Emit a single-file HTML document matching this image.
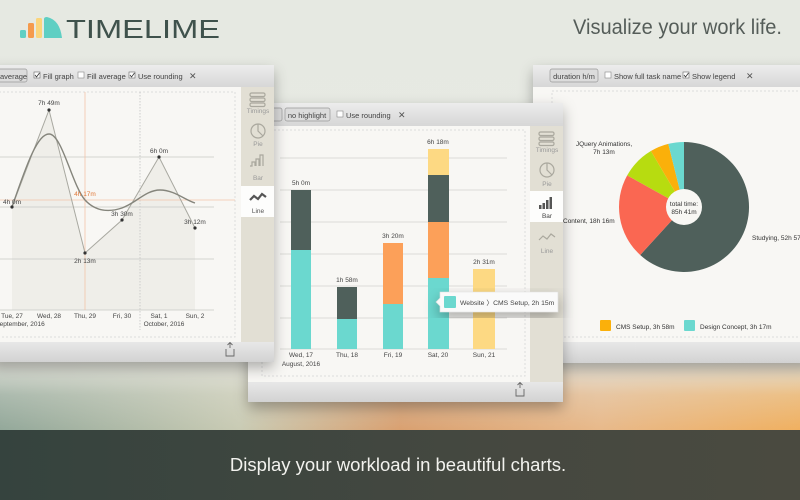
<!DOCTYPE html>
<html><head><meta charset="utf-8"><style>
html,body{margin:0;padding:0;width:800px;height:500px;overflow:hidden}
svg{display:block}
text{font-family:"Liberation Sans",sans-serif}
</style></head><body>
<svg width="800" height="500" viewBox="0 0 800 500" xmlns="http://www.w3.org/2000/svg">
<defs>
<linearGradient id="bg" x1="0" y1="0" x2="0" y2="1">
<stop offset="0" stop-color="#e6e9e2"/><stop offset="0.6" stop-color="#e8eae4"/><stop offset="1" stop-color="#dcdfd6"/>
</linearGradient>
<linearGradient id="band" x1="0" y1="0" x2="1" y2="0">
<stop offset="0" stop-color="#93a89a"/><stop offset="0.3" stop-color="#c9cbb4"/><stop offset="0.5" stop-color="#d9a070"/><stop offset="0.75" stop-color="#e8b98a"/><stop offset="1" stop-color="#f0b060"/>
</linearGradient>
<linearGradient id="bandv" x1="0" y1="0" x2="0" y2="1">
<stop offset="0" stop-color="#e4e4dc" stop-opacity="1"/><stop offset="0.5" stop-color="#e4e4dc" stop-opacity="0.3"/><stop offset="1" stop-color="#e4e4dc" stop-opacity="0"/>
</linearGradient>
<linearGradient id="dark" x1="0" y1="0" x2="1" y2="0">
<stop offset="0" stop-color="#35433e"/><stop offset="0.6" stop-color="#454840"/><stop offset="1" stop-color="#4a4a40"/>
</linearGradient>
<linearGradient id="tb" x1="0" y1="0" x2="0" y2="1">
<stop offset="0" stop-color="#ececec"/><stop offset="1" stop-color="#d6d6d6"/>
</linearGradient>
<linearGradient id="ft" x1="0" y1="0" x2="0" y2="1">
<stop offset="0" stop-color="#e8e8e8"/><stop offset="1" stop-color="#d2d2d2"/>
</linearGradient>
<filter id="sh" x="-20%" y="-20%" width="140%" height="150%"><feDropShadow dx="0" dy="6" stdDeviation="7" flood-color="#000" flood-opacity="0.3"/></filter>
</defs>
<rect width="800" height="500" fill="url(#bg)"/>
<rect y="360" width="800" height="70" fill="url(#band)"/>
<rect y="360" width="800" height="70" fill="url(#bandv)"/>
<rect y="430" width="800" height="70" fill="url(#dark)"/>
<text x="398" y="471" text-anchor="middle" font-size="18.5" fill="#f2f2ee">Display your workload in beautiful charts.</text>

<!-- logo -->
<rect x="20" y="30" width="6" height="8" rx="1.5" fill="#5fcfc3"/>
<rect x="28" y="23" width="6" height="15" rx="1.5" fill="#f59a4c"/>
<rect x="36" y="18" width="6" height="20" rx="1.5" fill="#fbd57b"/>
<path d="M44,38 L44,19 Q44,17 47,17 Q60,20 62,38 Z" fill="#5fcfc3"/>
<text x="66" y="38" font-size="26" fill="#3f524c" textLength="154" lengthAdjust="spacingAndGlyphs">TIMELIME</text>
<text x="573" y="34" font-size="21" fill="#555d59" textLength="209" lengthAdjust="spacingAndGlyphs">Visualize your work life.</text>

<!-- RIGHT WINDOW -->
<g filter="url(#sh)">
<rect x="533" y="65" width="280" height="298" fill="#f8f7f4"/>
<rect x="533" y="65" width="280" height="22" fill="url(#tb)"/>
<rect x="533" y="342" width="280" height="21" fill="url(#ft)"/>
</g>
<rect x="550" y="69" width="48" height="13" rx="2" fill="#dcdcdc" stroke="#999" stroke-width="0.7"/>
<text x="574" y="79" font-size="7.5" text-anchor="middle" fill="#444">duration h/m</text>
<rect x="605" y="72" width="6" height="6" fill="#fff" stroke="#888" stroke-width="0.6"/>
<text x="614" y="79" font-size="7.5" fill="#444">Show full task name</text>
<rect x="683" y="72" width="6" height="6" fill="#fff" stroke="#666" stroke-width="0.6"/>
<path d="M684,75 l1.5,2 l3,-4" stroke="#333" fill="none" stroke-width="0.8"/>
<text x="692" y="79" font-size="7.5" fill="#444">Show legend</text>
<text x="746" y="79" font-size="9" fill="#555">✕</text>
<rect x="552" y="91" width="260" height="246" fill="none" stroke="#ddd" stroke-dasharray="2,2"/>
<path d="M684,207 L684,142 A65,65 0 1 1 640.2,255 Z" fill="#4f605b"/>
<path d="M684,207 L640.2,255 A65,65 0 0 1 627.2,175.4 Z" fill="#fa6752"/>
<path d="M684,207 L627.2,175.4 A65,65 0 0 1 650.9,151 Z" fill="#b7dc10"/>
<path d="M684,207 L650.9,151 A65,65 0 0 1 668.3,143.9 Z" fill="#fbb00a"/>
<path d="M684,207 L668.3,143.9 A65,65 0 0 1 684,142 Z" fill="#6bd8cf"/>
<circle cx="684" cy="207" r="18" fill="#f8f7f4"/>
<text x="684" y="206" font-size="6.5" text-anchor="middle" fill="#333">total time:</text>
<text x="684" y="214" font-size="6.5" text-anchor="middle" fill="#333">85h 41m</text>
<text x="604" y="146" font-size="6.5" text-anchor="middle" fill="#333">JQuery Animations,</text>
<text x="604" y="154" font-size="6.5" text-anchor="middle" fill="#333">7h 13m</text>
<text x="563" y="223" font-size="6.5" fill="#333">Content, 18h 16m</text>
<text x="752" y="240" font-size="6.5" fill="#333">Studying, 52h 57m</text>
<rect x="600" y="320" width="11" height="11" rx="1" fill="#fbb00a"/>
<text x="616" y="329" font-size="6.5" fill="#333">CMS Setup, 3h 58m</text>
<rect x="684" y="320" width="11" height="11" rx="1" fill="#6bd8cf"/>
<text x="700" y="329" font-size="6.5" fill="#333">Design Concept, 3h 17m</text>

<!-- MIDDLE WINDOW -->
<g filter="url(#sh)">
<rect x="248" y="103" width="315" height="299" fill="#f8f7f4"/>
<rect x="248" y="103" width="315" height="23" fill="url(#tb)"/>
<rect x="248" y="382" width="315" height="20" fill="url(#ft)"/>
</g>
<rect x="272" y="108" width="10" height="13" rx="2" fill="#dcdcdc" stroke="#999" stroke-width="0.7"/>
<rect x="285" y="108" width="45" height="13" rx="2" fill="#dcdcdc" stroke="#999" stroke-width="0.7"/>
<text x="307" y="118" font-size="7.5" text-anchor="middle" fill="#444">no highlight</text>
<rect x="337" y="111" width="6" height="6" fill="#fff" stroke="#888" stroke-width="0.6"/>
<text x="346" y="118" font-size="7.5" fill="#444">Use rounding</text>
<text x="398" y="118" font-size="9" fill="#555">✕</text>
<rect x="262" y="130" width="263" height="246" fill="none" stroke="#ddd" stroke-dasharray="2,2"/>
<g stroke="#d2d2ce" stroke-width="0.8">
<line x1="280" y1="158" x2="507" y2="158"/><line x1="280" y1="190" x2="507" y2="190"/><line x1="280" y1="222" x2="507" y2="222"/><line x1="280" y1="254" x2="507" y2="254"/><line x1="280" y1="286" x2="507" y2="286"/><line x1="280" y1="318" x2="507" y2="318"/><line x1="280" y1="349" x2="507" y2="349"/>
</g>
<rect x="291" y="190" width="20" height="60" fill="#4f605b"/><rect x="291" y="250" width="20" height="99" fill="#6bd8cf"/>
<rect x="337" y="287" width="20" height="32" fill="#4f605b"/><rect x="337" y="319" width="20" height="30" fill="#6bd8cf"/>
<rect x="383" y="243" width="20" height="61" fill="#fca059"/><rect x="383" y="304" width="20" height="45" fill="#6bd8cf"/>
<rect x="428" y="149" width="21" height="26" fill="#fdd983"/><rect x="428" y="175" width="21" height="47" fill="#4f605b"/><rect x="428" y="222" width="21" height="56" fill="#fca059"/><rect x="428" y="278" width="21" height="71" fill="#6bd8cf"/>
<rect x="473" y="269" width="22" height="80" fill="#fdd983"/>
<g font-size="6.5" fill="#444" text-anchor="middle">
<text x="301" y="185">5h 0m</text><text x="347" y="282">1h 58m</text><text x="393" y="238">3h 20m</text><text x="438" y="144">6h 18m</text><text x="484" y="264">2h 31m</text>
<text x="301" y="357">Wed, 17</text><text x="347" y="357">Thu, 18</text><text x="393" y="357">Fri, 19</text><text x="438" y="357">Sat, 20</text><text x="484" y="357">Sun, 21</text>
<text x="301" y="366">August, 2016</text>
</g>
<rect x="530" y="126" width="33" height="256" fill="#e2dfd4"/>
<rect x="530" y="191" width="33" height="31" fill="#fdfdfc"/>
<g fill="none" stroke="#aaa89e" stroke-width="1.2">
<rect x="539" y="132" width="15" height="3.5" rx="1.5"/><rect x="539" y="137" width="15" height="3.5" rx="1.5"/><rect x="539" y="142" width="15" height="3.5" rx="1.5"/>
<circle cx="547" cy="170" r="7"/><path d="M547,163 V170 L552,175"/>
<path d="M539,240 l4,-4 l4,3 l4,-5 l4,3"/>
</g>
<g font-size="6.5" fill="#999" text-anchor="middle"><text x="547" y="152">Timings</text><text x="547" y="186">Pie</text><text x="547" y="253">Line</text></g>
<g fill="#555"><rect x="539" y="205" width="2.5" height="4"/><rect x="542.5" y="203" width="2.5" height="6"/><rect x="546" y="200" width="2.5" height="9"/><rect x="549.5" y="197" width="2.5" height="12"/></g>
<text x="547" y="218" font-size="6.5" fill="#444" text-anchor="middle">Bar</text>
<path d="M516,389 v7 h8 v-7 M520,388 v-5 M517.5,385 l2.5,-2.5 l2.5,2.5" fill="none" stroke="#666" stroke-width="0.9"/>
<path d="M440,292 h118 v20 h-118 v-6 l-4,-4 l4,-4 z" fill="#fafafa" stroke="#ddd" stroke-width="0.6" filter="url(#sh)"/>
<rect x="444" y="296" width="12" height="12" rx="1" fill="#6bd8cf"/>
<text x="460" y="305" font-size="6.8" fill="#444">Website 〉CMS Setup, 2h 15m</text>

<!-- LEFT WINDOW -->
<g filter="url(#sh)">
<rect x="-10" y="65" width="284" height="297" fill="#f8f7f4"/>
<rect x="-10" y="65" width="284" height="22" fill="url(#tb)"/>
<rect x="-10" y="342" width="284" height="20" fill="url(#ft)"/>
</g>
<rect x="-6" y="69" width="33" height="13" rx="2" fill="#dcdcdc" stroke="#999" stroke-width="0.7"/>
<text x="0" y="79" font-size="7.5" fill="#444">average</text>
<rect x="34" y="72" width="6" height="6" fill="#fff" stroke="#666" stroke-width="0.6"/>
<path d="M35,75 l1.5,2 l3,-4" stroke="#333" fill="none" stroke-width="0.8"/>
<text x="43" y="79" font-size="7.5" fill="#444">Fill graph</text>
<rect x="78" y="72" width="6" height="6" fill="#fff" stroke="#888" stroke-width="0.6"/>
<text x="87" y="79" font-size="7.5" fill="#444">Fill average</text>
<rect x="129" y="72" width="6" height="6" fill="#fff" stroke="#666" stroke-width="0.6"/>
<path d="M130,75 l1.5,2 l3,-4" stroke="#333" fill="none" stroke-width="0.8"/>
<text x="138" y="79" font-size="7.5" fill="#444">Use rounding</text>
<text x="189" y="79" font-size="9" fill="#555">✕</text>
<rect x="-5" y="92" width="240" height="245" fill="none" stroke="#ddd" stroke-dasharray="2,2"/>
<polygon points="12,207 49,110 85,253 122,220 159,157 195,228 195,310 12,310" fill="#efeee9"/>
<line x1="0" y1="157" x2="214" y2="157" stroke="#c8c8c4" stroke-width="0.8"/>
<line x1="0" y1="207" x2="214" y2="207" stroke="#c8c8c4" stroke-width="0.8"/>
<line x1="0" y1="259" x2="214" y2="259" stroke="#c8c8c4" stroke-width="0.8"/>
<line x1="0" y1="310" x2="214" y2="310" stroke="#c8c8c4" stroke-width="0.8"/>
<line x1="140" y1="92" x2="140" y2="330" stroke="#ccc" stroke-dasharray="1.5,1.5"/>
<line x1="85" y1="92" x2="85" y2="310" stroke="#f3c4a8" stroke-width="0.8"/>
<line x1="0" y1="200" x2="235" y2="200" stroke="#f3c4a8" stroke-width="0.8"/>
<polyline points="12,207 49,110 85,253 122,220 159,157 195,228" fill="none" stroke="#a8a8a0" stroke-width="1"/>
<path d="M12,207 C28,160 38,134 49,134 C62,134 72,185 85,200 C96,212 110,212 122,208 C136,203 146,190 160,190 C174,190 185,200 195,203" fill="none" stroke="#85857c" stroke-width="1.4"/>
<g fill="#333"><circle cx="12" cy="207" r="1.6"/><circle cx="49" cy="110" r="1.6"/><circle cx="85" cy="253" r="1.6"/><circle cx="122" cy="220" r="1.6"/><circle cx="159" cy="157" r="1.6"/><circle cx="195" cy="228" r="1.6"/></g>
<g font-size="6.5" fill="#444" text-anchor="middle">
<text x="49" y="105">7h 49m</text><text x="12" y="204">4h 0m</text><text x="85" y="263">2h 13m</text><text x="122" y="216">3h 30m</text><text x="159" y="153">6h 0m</text><text x="195" y="224">3h 12m</text>
<text x="85" y="196" fill="#e07838">4h 17m</text>
<text x="12" y="318">Tue, 27</text><text x="49" y="318">Wed, 28</text><text x="85" y="318">Thu, 29</text><text x="122" y="318">Fri, 30</text><text x="159" y="318">Sat, 1</text><text x="195" y="318">Sun, 2</text>
<text x="20" y="326">September, 2016</text><text x="164" y="326">October, 2016</text>
</g>
<rect x="241" y="87" width="33" height="255" fill="#e2dfd4"/>
<rect x="241" y="186" width="33" height="31" fill="#fdfdfc"/>
<g fill="none" stroke="#aaa89e" stroke-width="1.2">
<rect x="250" y="93" width="15" height="3.5" rx="1.5"/><rect x="250" y="98" width="15" height="3.5" rx="1.5"/><rect x="250" y="103" width="15" height="3.5" rx="1.5"/>
<circle cx="258" cy="131" r="7"/><path d="M258,124 V131 L263,136"/>
<path d="M250,166 h2 v-4 h3 v4 M256,166 v-7 h3 v7 M260,166 v-11 h3 v11"/>
</g>
<g font-size="6.5" fill="#999" text-anchor="middle"><text x="258" y="113">Timings</text><text x="258" y="146">Pie</text><text x="258" y="180">Bar</text></g>
<path d="M250,200 l4,-4 l4,3 l4,-5 l4,3" fill="none" stroke="#555" stroke-width="2.2"/>
<text x="258" y="213" font-size="6.5" fill="#555" text-anchor="middle">Line</text>
<path d="M226,349 v7 h8 v-7 M230,348 v-5 M227.5,345 l2.5,-2.5 l2.5,2.5" fill="none" stroke="#666" stroke-width="0.9"/>
</svg>
</body></html>
